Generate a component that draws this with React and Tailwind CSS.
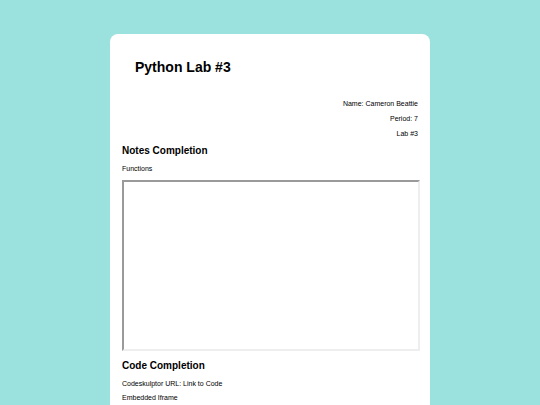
import React from "react";

function App() {
  return (
    <div className="min-h-screen bg-[#9be1de] flex justify-center pt-[34px] font-['Liberation_Sans',Arial,sans-serif] text-black overflow-hidden h-[405px]">
      <div className="w-[320px] bg-white rounded-t-[8px] px-3 h-[400px]">
        {/* Title */}
        <h1 className="text-[14px] font-bold pl-[13px] pt-[26px] leading-[14px]">Python Lab #3</h1>

        {/* Student info */}
        <div className="mt-[26px] text-right text-[7px] leading-[8px]">
          <p>Name: Cameron Beattie</p>
          <p className="mt-[7px]">Period: 7</p>
          <p className="mt-[7px]">Lab #3</p>
        </div>

        {/* Notes */}
        <h2 className="mt-[8px] text-[10px] font-bold leading-[10px]">Notes Completion</h2>
        <p className="mt-[9px] text-[7px] leading-[8px]">Functions</p>
        <div className="mt-[7px] h-[171px] w-[298px] border-2 border-t-[#9a9a9a] border-l-[#9a9a9a] border-r-[#eeeeee] border-b-[#eeeeee] bg-white"></div>

        {/* Code */}
        <h2 className="mt-[10px] text-[10px] font-bold leading-[10px]">Code Completion</h2>
        <p className="mt-[9px] text-[7px] leading-[8px]">Codeskulptor URL: Link to Code</p>
        <p className="mt-[6px] text-[7px] leading-[8px]">Embedded Iframe</p>
      </div>
    </div>
  );
}

export default App;
